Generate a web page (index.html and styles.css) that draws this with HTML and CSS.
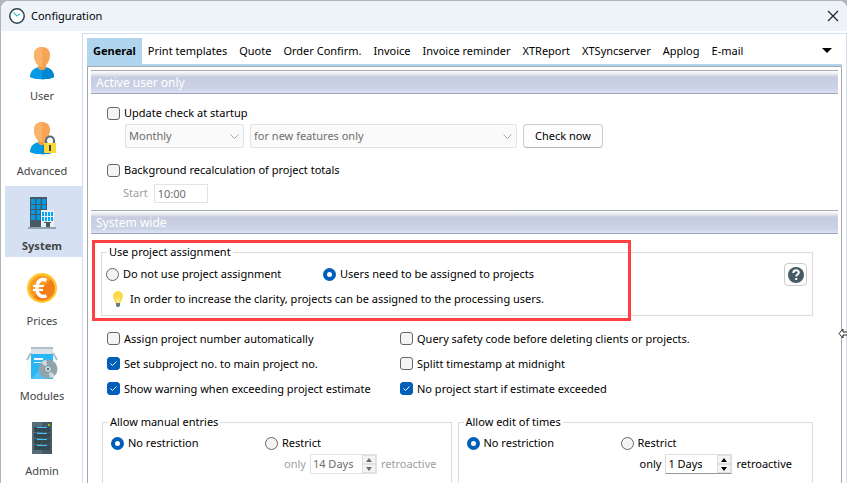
FILE: index.html
```
<!DOCTYPE html>
<html lang="en">

<head>
    <meta charset="UTF-8">
    <meta name="viewport" content="width=device-width, initial-scale=1.0">
    <title>Configuration</title>
    <link rel="stylesheet" href="styles.css">
</head>

<body>
    <div class="window">
        <header class="titlebar">
            <svg class="clock" width="18" height="18" viewBox="0 0 18 18">
                <circle cx="9" cy="9" r="7.2" fill="#fff" stroke="#2f434c" stroke-width="1.5" />
                <path d="M5.5 5.5L9 9l3-2" fill="none" stroke="#4cc0b8" stroke-width="1.3" />
            </svg>
            <h1>Configuration</h1>
            <button class="close" aria-label="Close">
                <svg width="12" height="12" viewBox="0 0 12 12">
                    <path d="M1 1l10 10M11 1L1 11" stroke="#222" stroke-width="1.2" />
                </svg>
            </button>
        </header>

        <div class="main">
            <nav class="sidebar">
                <a href="#user" class="item">
                    <svg width="32" height="34" viewBox="0 0 32 34">
                        <path d="M4 31C4 24 9 21 16 21s12 3 12 10c-4 3-20 3-24 0z" fill="#039be5" />
                        <path d="M16 21c7 0 12 3 12 10-2 1.500-7 2.200-12 2.200z" fill="#0288d1" />
                        <path d="M12 17h8v5c-2 3-6 3-8 0z" fill="#f29b4b" />
                        <path d="M16 1C10 1 8 5 8 9c0 5 3 12 8 12s8-7 8-12c0-4-2-8-8-8z" fill="#f8a457" />
                        <path d="M16 1C10 1 8 5 8 9c0 5 3 12 8 12z" fill="#fbb26a" />
                    </svg>
                    <span>User</span>
                </a>
                <a href="#advanced" class="item">
                    <svg width="32" height="34" viewBox="0 0 32 34">
                        <path d="M4 31C4 24 9 21 16 21s12 3 12 10c-4 3-20 3-24 0z" fill="#039be5" />
                        <path d="M16 21c7 0 12 3 12 10-2 1.500-7 2.200-12 2.200z" fill="#0288d1" />
                        <path d="M12 17h8v5c-2 3-6 3-8 0z" fill="#f29b4b" />
                        <path d="M16 1C10 1 8 5 8 9c0 5 3 12 8 12s8-7 8-12c0-4-2-8-8-8z" fill="#f8a457" />
                        <path d="M16 1C10 1 8 5 8 9c0 5 3 12 8 12z" fill="#fbb26a" />
                        <path d="M20 22v-2.500a4 4 0 0 1 8 0V22" fill="none" stroke="#546e7a" stroke-width="2.200" />
                        <rect x="18" y="22" width="12" height="10" fill="#fdd835" />
                        <path d="M23 24h2v6h-2z" fill="#37474f" />
                    </svg>
                    <span>Advanced</span>
                </a>
                <a href="#system" class="item active">
                    <svg width="32" height="34" viewBox="0 0 32 34">
                        <path d="M4 1h17v31H4z" fill="#455a64" />
                        <path d="M5 3h4v5H5zM10.500 3h4v5h-4zM16 3h4v5h-4zM5 9h4v4H5zM10.500 9h4v4h-4zM16 9h4v4h-4zM5 14h4v4H5zM10.500 14h4v4h-4zM5 19h4v5H5zM10.500 19h4v5h-4z" fill="#039be5" />
                        <path d="M15 14h13v18H15z" fill="#eceff1" />
                        <path d="M16 16h2v4h-2zM19 16h2v4h-2zM22 16h2v4h-2zM25 16h2v4h-2zM16 21h2v4h-2zM19 21h2v4h-2zM22 21h2v4h-2zM25 21h2v4h-2z" fill="#03a9f4" />
                        <path d="M18 26h7v1h-7zM20 27h4v5h-4z" fill="#455a64" />
                        <path d="M2 31h28v2H2z" fill="#90a4ae" />
                    </svg>
                    <span>System</span>
                </a>
                <a href="#prices" class="item">
                    <svg width="32" height="34" viewBox="0 0 32 34">
                        <circle cx="16" cy="17" r="15" fill="#fdc82f" />
                        <circle cx="16" cy="17" r="12.500" fill="#fb9a26" />
                        <path d="M25 8.300A12.500 12.500 0 0 1 7.300 26z" fill="#f57f17" />
                        <path d="M20.500 9.200c-6-2.200-9.500 1.300-9.500 7.800s3.500 10 9.500 7.800" fill="none" stroke="#fff" stroke-width="3.500" />
                        <path d="M7 15h11M7 19h10" stroke="#fff" stroke-width="2" />
                    </svg>
                    <span>Prices</span>
                </a>
                <a href="#modules" class="item">
                    <svg width="32" height="34" viewBox="0 0 32 34">
                        <path d="M5 1h22v7H5z" fill="#b0bec5" />
                        <path d="M5 3h22v5H5z" fill="#dbe2e6" />
                        <path d="M5 8h22v25H5z" fill="#29b6f6" />
                        <path d="M5 33l12-13 5 13z" fill="#4fc3f7" />
                        <path d="M5 7l-4 7M27 7l4 7" stroke="#b0bec5" stroke-width="2" />
                        <path d="M8 12h9v2H8zM8 16h7v1H8z" fill="#fff" />
                        <circle cx="22" cy="23" r="9.500" fill="#90a4ae" />
                        <path d="M22 23L15 16.500a9.500 9.500 0 0 1 5-2.800zM22 23l7 6.500a9.500 9.500 0 0 1-5 2.800z" fill="#cfd8dc" />
                        <circle cx="22" cy="23" r="3.500" fill="#cfd8dc" stroke="#78909c" />
                        <circle cx="22" cy="23" r="1.200" fill="#546e7a" />
                    </svg>
                    <span>Modules</span>
                </a>
                <a href="#admin" class="item">
                    <svg width="32" height="34" viewBox="0 0 32 34">
                        <path d="M6 1h20v32H6z" fill="#455a64" />
                        <path d="M6 1h10v32H6z" fill="#546e7a" />
                        <path d="M8 6h16v5H8zM8 12h16v5H8zM8 18h16v5H8zM8 24h16v5H8z" fill="#37474f" />
                        <path d="M11 6h10v1H11zM11 12h10v1H11zM11 18h10v1H11zM11 24h10v1H11z" fill="#40c4ff" />
                        <path d="M22 3h2v2h-2z" fill="#76c51f" />
                    </svg>
                    <span>Admin</span>
                </a>
            </nav>

            <div class="content">
                <div class="tabs" role="tablist">
                    <button class="tab selected" role="tab">General</button>
                    <button class="tab" role="tab">Print templates</button>
                    <button class="tab" role="tab">Quote</button>
                    <button class="tab" role="tab">Order Confirm.</button>
                    <button class="tab" role="tab">Invoice</button>
                    <button class="tab" role="tab">Invoice reminder</button>
                    <button class="tab" role="tab">XTReport</button>
                    <button class="tab" role="tab">XTSyncserver</button>
                    <button class="tab" role="tab">Applog</button>
                    <button class="tab" role="tab">E-mail</button>
                    <button class="more" aria-label="More tabs">
                        <svg width="10" height="6" viewBox="0 0 10 6">
                            <path d="M0 0h10L5 5z" />
                        </svg>
                    </button>
                </div>

                <div class="panel">
                    <h2>Active user only</h2>
                    <div class="update">
                        <label class="check"><input type="checkbox">Update check at startup</label>
                        <div class="line">
                            <select class="interval" aria-label="Interval" disabled>
                                <option>Monthly</option>
                            </select>
                            <select class="features" aria-label="Features" disabled>
                                <option>for new features only</option>
                            </select>
                            <button class="btn">Check now</button>
                        </div>
                        <label class="check"><input type="checkbox">Background recalculation of project totals</label>
                        <div class="line start">
                            <label for="start-time">Start</label>
                            <input type="text" id="start-time" class="text" value="10:00" disabled>
                        </div>
                    </div>

                    <h2>System wide</h2>
                    <div class="assign">
                        <fieldset>
                            <legend>Use project assignment</legend>
                            <div class="radios">
                                <label class="check"><input type="radio" name="assign">Do not use project assignment</label>
                                <label class="check"><input type="radio" name="assign" checked>Users need to be assigned to projects</label>
                            </div>
                            <p class="hint">
                                <svg width="14" height="18" viewBox="0 0 14 18">
                                    <path d="M7 1a5 5 0 0 0-5 5c0 3 2 4 2.500 7h5C10 10 12 9 12 6a5 5 0 0 0-5-5z" fill="#fdd94a" />
                                    <path d="M5.500 8L7 13l1.500-5" fill="none" stroke="#fff3b0" />
                                    <path d="M5 13h4v2.500L8 17H6l-1-1.500z" fill="#607d8b" />
                                </svg>
                                In order to increase the clarity, projects can be assigned to the processing users.
                            </p>
                            <button class="help" aria-label="Help">
                                <svg width="18" height="18" viewBox="0 0 18 18">
                                    <circle cx="9" cy="9" r="8" fill="#455a64" />
                                    <path d="M6.300 7c0-3.600 5.500-3.500 5.500-.5 0 2-2.600 2-2.600 4M9.200 12v2" fill="none" stroke="#fff" stroke-width="2" />
                                </svg>
                            </button>
                        </fieldset>
                        <div class="marker"></div>
                    </div>

                    <div class="options">
                        <label class="check"><input type="checkbox">Assign project number automatically</label>
                        <label class="check"><input type="checkbox">Query safety code before deleting clients or projects.</label>
                        <label class="check"><input type="checkbox" checked>Set subproject no. to main project no.</label>
                        <label class="check"><input type="checkbox">Splitt timestamp at midnight</label>
                        <label class="check"><input type="checkbox" checked>Show warning when exceeding project estimate</label>
                        <label class="check"><input type="checkbox" checked>No project start if estimate exceeded</label>
                    </div>

                    <div class="limits">
                        <fieldset>
                            <legend>Allow manual entries</legend>
                            <div class="choice">
                                <label class="check"><input type="radio" name="manual" checked>No restriction</label>
                                <label class="check"><input type="radio" name="manual">Restrict</label>
                            </div>
                            <div class="days off">
                                <label for="manual-days">only</label>
                                <span class="spin">
                                    <input type="text" id="manual-days" value="14 Days" disabled>
                                    <span class="arrows">
                                        <button aria-label="More days" disabled><svg width="6" height="4" viewBox="0 0 6 4"><path d="M0 4h6L3 0z" /></svg></button>
                                        <button aria-label="Fewer days" disabled><svg width="6" height="4" viewBox="0 0 6 4"><path d="M0 0h6L3 4z" /></svg></button>
                                    </span>
                                </span>
                                <span>retroactive</span>
                            </div>
                        </fieldset>
                        <fieldset>
                            <legend>Allow edit of times</legend>
                            <div class="choice">
                                <label class="check"><input type="radio" name="edit" checked>No restriction</label>
                                <label class="check"><input type="radio" name="edit">Restrict</label>
                            </div>
                            <div class="days">
                                <label for="edit-days">only</label>
                                <span class="spin">
                                    <input type="text" id="edit-days" value="1 Days">
                                    <span class="arrows">
                                        <button aria-label="More days"><svg width="6" height="4" viewBox="0 0 6 4"><path d="M0 4h6L3 0z" /></svg></button>
                                        <button aria-label="Fewer days"><svg width="6" height="4" viewBox="0 0 6 4"><path d="M0 0h6L3 4z" /></svg></button>
                                    </span>
                                </span>
                                <span>retroactive</span>
                            </div>
                        </fieldset>
                    </div>
                </div>
            </div>
        </div>
    </div>
    <svg class="cursor" width="9" height="11" viewBox="0 0 9 11">
        <path d="M1 5.500L5 1v3h5v3H5v3z" fill="#fff" stroke="#222" />
    </svg>
</body>

</html>
```

FILE: styles.css
```
* {
    box-sizing: border-box;
}

body {
    margin: 0;
    padding: 1px 0 0 1px;
    height: 100vh;
    overflow: hidden;
    background: #b4b4b6;
    font-family: "Noto Sans", "Open Sans", sans-serif;
    font-size: 11px;
    line-height: 16px;
    color: #000;
}

button,
input,
select {
    font: inherit;
    color: inherit;
}

.window {
    height: 100%;
    display: flex;
    flex-direction: column;
    background: #fff;
    border-radius: 8px 8px 0 0;
    overflow: hidden;
}

.titlebar {
    height: 30px;
    flex: none;
    display: flex;
    align-items: center;
    gap: 5px;
    padding: 0 8px 0 7px;
    background: #eef3fa;
}

.titlebar h1 {
    flex: 1;
    margin: 0;
    font-size: 11px;
    font-weight: normal;
}

.close,
.more {
    display: flex;
    padding: 0;
    border: 0;
    background: none;
}

.main {
    flex: 1;
    display: flex;
    min-height: 0;
    padding-top: 2px;
}

/* left navigation */
.sidebar {
    width: 81px;
    flex: none;
    padding: 3px 0 0 4px;
}

.item {
    height: 71px;
    margin-bottom: 4px;
    padding: 10px 3px 0 0;
    display: flex;
    flex-direction: column;
    align-items: center;
    gap: 8px;
    color: #444;
    text-decoration: none;
}

.active {
    background: #d5e0f2;
    font-weight: bold;
}

.content {
    flex: 1;
    min-width: 0;
    display: flex;
    flex-direction: column;
    padding: 4px 4px 0;
    border: 1px solid #cfdff0;
    border-bottom: 0;
}

.tabs {
    flex: none;
    display: flex;
    height: 28px;
    border-bottom: 2px solid #b0d6ef;
}

.tab {
    padding: 0 6px;
    border: 0;
    background: none;
    white-space: nowrap;
}

.selected {
    background: #b0d6ef;
    font-weight: bold;
}

.more {
    align-items: center;
    margin-left: auto;
    padding-right: 10px;
}

.panel {
    flex: 1;
    min-height: 0;
    overflow: hidden;
    padding: 3px;
    border: 1px solid #a8a8ac;
    border-bottom: 0;
}

.panel h2 {
    height: 24px;
    margin: 0;
    padding-left: 5px;
    border-top: 1px solid #aaa;
    border-bottom: 1px solid #9fa3bf;
    background: linear-gradient(#fff, #e0e2ec 4px, #c6cce0 6px, #cbd3e7 18px, #dde3f4);
    color: #fff;
    font-size: 12px;
    font-weight: normal;
    line-height: 24px;
}

/* check boxes and radio buttons */
.check {
    display: flex;
    align-items: center;
    gap: 4px;
    white-space: nowrap;
}

.check input {
    appearance: none;
    width: 13px;
    height: 13px;
    flex: none;
    margin: 0;
    border: 1px solid #666;
    border-radius: 3px;
    background: #f4f4f4;
}

.check input[type="radio"] {
    border-radius: 50%;
}

.check input[type="radio"]:checked {
    border: 4px solid #005fb8;
    background: #fff;
}

.check input[type="checkbox"]:checked {
    border-color: #005fb8;
    background: #005fb8 url("data:image/svg+xml,%3Csvg xmlns='http://www.w3.org/2000/svg' viewBox='0 0 11 11'%3E%3Cpath d='M2.500 5.500l2 2 4-4' fill='none' stroke='white'/%3E%3C/svg%3E");
}

.update {
    height: 116px;
    padding: 11px 16px 0;
}

.line {
    display: flex;
    align-items: center;
    gap: 6px;
    height: 24px;
    margin: 3px 0 14px 18px;
}

.line select {
    height: 24px;
    padding: 0 3px;
    appearance: none;
    border: 1px solid #e3e3e3;
    border-radius: 2px;
    background: #fafafa url("data:image/svg+xml,%3Csvg xmlns='http://www.w3.org/2000/svg' width='9' height='5'%3E%3Cpath d='M.5.5l4 4 4-4' fill='none' stroke='%23aaa'/%3E%3C/svg%3E") no-repeat right 4px center;
    color: #6d6d6d;
    opacity: 1;
}

.interval {
    width: 119px;
}

.features {
    width: 267px;
}

.btn {
    width: 80px;
    height: 24px;
    padding: 0;
    border: 1px solid #ccc;
    border-bottom-color: #b5b5b5;
    border-radius: 4px;
    background: #fdfdfd;
}

.start {
    margin-left: 16px;
    color: #a0a0a0;
}

.text {
    width: 54px;
    height: 19px;
    padding: 0 3px;
    border: 1px solid #e3e3e3;
    background: #fff;
    color: #6d6d6d;
}

fieldset {
    min-width: 0;
    margin: 0;
    padding: 0 4px;
    border: 1px solid #dcdcdc;
}

legend {
    margin-left: 1px;
    padding: 0 2px;
    line-height: 16px;
}

.assign {
    position: relative;
    padding: 10px 25px 0 10px;
}

.assign fieldset {
    position: relative;
    height: 72px;
}

.radios {
    display: grid;
    grid-template-columns: 217px auto;
    margin-top: 6px;
}

.hint {
    display: flex;
    align-items: center;
    gap: 5px;
    margin: 8px 0 0 5px;
}

.help {
    position: absolute;
    top: 3px;
    right: 5px;
    width: 23px;
    height: 23px;
    display: grid;
    place-items: center;
    padding: 0;
    border: 1px solid #ccc;
    border-radius: 4px;
    background: #fdfdfd;
}

.marker {
    position: absolute;
    top: 6px;
    left: 1px;
    width: 539px;
    height: 81px;
    border: 3px solid #ff4040;
}

.options {
    display: grid;
    grid-template-columns: 293px auto;
    grid-auto-rows: 25px;
    padding: 10px 16px 0;
}

.limits {
    display: grid;
    grid-template-columns: 350fr 356fr;
    gap: 6px;
    margin: 13px 25px 0 11px;
}

.limits fieldset {
    height: 90px;
    padding: 0 8px;
}

.limits legend {
    margin-left: -3px;
}

.choice {
    display: grid;
    grid-template-columns: 154px auto;
    margin-top: 5px;
}

.days {
    display: flex;
    align-items: center;
    gap: 4px;
    margin: 3px 0 0 173px;
}

.off {
    color: #a0a0a0;
}

.spin {
    display: flex;
    width: 67px;
    height: 20px;
    border: 1px solid #ddd;
    border-bottom-color: #999;
    background: #fff;
}

.off .spin {
    border-color: #e3e3e3;
    color: #6d6d6d;
}

.spin input {
    flex: 1;
    min-width: 0;
    padding: 0 0 0 2px;
    border: 0;
    background: none;
}

.arrows {
    display: flex;
    flex-direction: column;
    width: 14px;
}

.arrows button {
    flex: 1;
    display: grid;
    place-items: center;
    padding: 0;
    border: 1px solid #e0e0e0;
    background: #f4f4f4;
    fill: currentColor;
}

.cursor {
    position: absolute;
    top: 328px;
    right: 0;
}
```
